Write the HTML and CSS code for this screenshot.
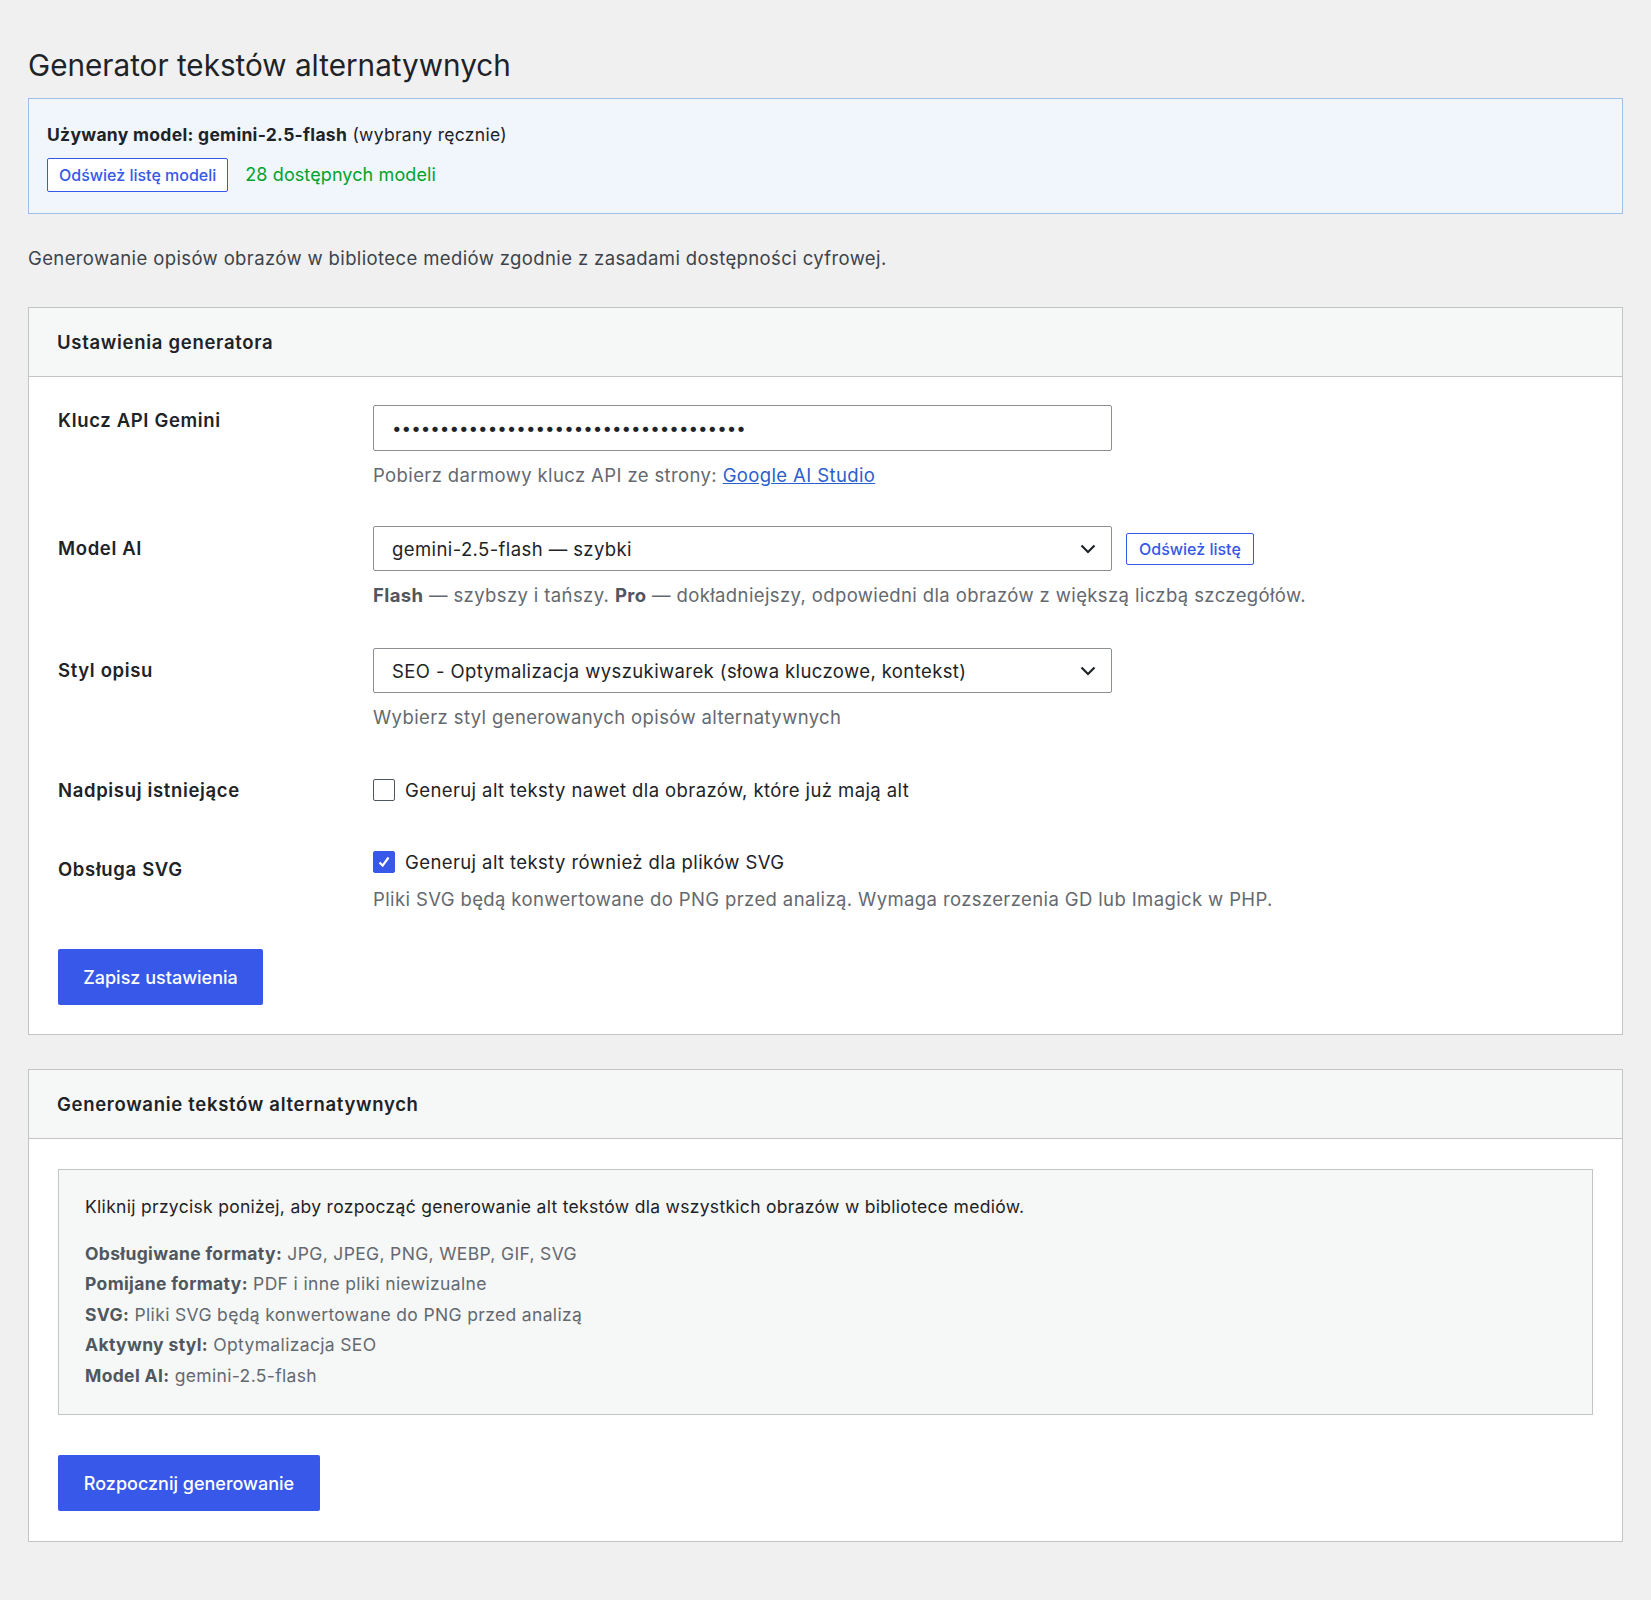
FILE: index.html
```html
<!DOCTYPE html>
<html lang="pl">
<head>
    <meta charset="UTF-8">
    <meta name="viewport" content="width=device-width, initial-scale=1.0">
    <title>Generator tekstów alternatywnych</title>
    <link rel="stylesheet" href="styles.css">
</head>
<body>
    <div class="wrap">
        <h1>Generator tekstów alternatywnych</h1>

        <div class="notice">
            <p class="notice-model"><strong>Używany model: gemini-2.5-flash</strong> (wybrany ręcznie)</p>
            <div class="notice-actions">
                <button class="btn-outline btn-small">Odśwież listę modeli</button>
                <span class="models-count">28 dostępnych modeli</span>
            </div>
        </div>

        <p class="intro">Generowanie opisów obrazów w bibliotece mediów zgodnie z zasadami dostępności cyfrowej.</p>

        <div class="card">
            <h2 class="card-header">Ustawienia generatora</h2>
            <form class="card-body settings">
                <div class="form-row row-key">
                    <label class="form-label label-key">Klucz API Gemini</label>
                    <div class="form-field">
                        <input type="password" class="text-input" value="abcdefghijklmnopqrstuvwxyz0123456789A">
                        <p class="help">Pobierz darmowy klucz API ze strony: <a href="#">Google AI Studio</a></p>
                    </div>
                </div>

                <div class="form-row">
                    <label class="form-label label-select">Model AI</label>
                    <div class="form-field">
                        <div class="field-inline">
                            <select class="select-input">
                                <option>gemini-2.5-flash — szybki</option>
                            </select>
                            <button type="button" class="btn-outline btn-small">Odśwież listę</button>
                        </div>
                        <p class="help"><strong>Flash</strong> — szybszy i tańszy. <strong>Pro</strong> — dokładniejszy, odpowiedni dla obrazów z większą liczbą szczegółów.</p>
                    </div>
                </div>

                <div class="form-row">
                    <label class="form-label label-select">Styl opisu</label>
                    <div class="form-field">
                        <select class="select-input">
                            <option>SEO - Optymalizacja wyszukiwarek (słowa kluczowe, kontekst)</option>
                        </select>
                        <p class="help">Wybierz styl generowanych opisów alternatywnych</p>
                    </div>
                </div>

                <div class="form-row row-check">
                    <label class="form-label">Nadpisuj istniejące</label>
                    <div class="form-field">
                        <label class="check"><input type="checkbox"> Generuj alt teksty nawet dla obrazów, które już mają alt</label>
                    </div>
                </div>

                <div class="form-row row-svg">
                    <label class="form-label">Obsługa SVG</label>
                    <div class="form-field">
                        <label class="check"><input type="checkbox" checked> Generuj alt teksty również dla plików SVG</label>
                        <p class="help">Pliki SVG będą konwertowane do PNG przed analizą. Wymaga rozszerzenia GD lub Imagick w PHP.</p>
                    </div>
                </div>

                <button type="button" class="btn-primary save-btn">Zapisz ustawienia</button>
            </form>
        </div>

        <div class="card">
            <h2 class="card-header">Generowanie tekstów alternatywnych</h2>
            <div class="card-body">
                <div class="info-box">
                    <p class="info-lead">Kliknij przycisk poniżej, aby rozpocząć generowanie alt tekstów dla wszystkich obrazów w bibliotece mediów.</p>
                    <ul class="info-list">
                        <li><strong>Obsługiwane formaty:</strong> JPG, JPEG, PNG, WEBP, GIF, SVG</li>
                        <li><strong>Pomijane formaty:</strong> PDF i inne pliki niewizualne</li>
                        <li><strong>SVG:</strong> Pliki SVG będą konwertowane do PNG przed analizą</li>
                        <li><strong>Aktywny styl:</strong> Optymalizacja SEO</li>
                        <li><strong>Model AI:</strong> gemini-2.5-flash</li>
                    </ul>
                </div>
                <button type="button" class="btn-primary start-btn">Rozpocznij generowanie</button>
            </div>
        </div>
    </div>
</body>
</html>
```

FILE: styles.css
```css
body {
    margin: 0;
    background: #f0f0f1;
    color: #1d2327;
    font-family: Inter, "Noto Sans", sans-serif;
    font-size: 17.5px;
    letter-spacing: 0.3px;
    line-height: 26px;
}
.wrap {
    padding: 46px 28px 58px;
}
h1 {
    margin: 0;
    font-size: 29.7px;
    font-weight: 400;
    letter-spacing: 0;
    line-height: 39px;
}

/* model notice */
.notice {
    margin-top: 13px;
    background: #f0f6fc;
    border: 1px solid #9ec2e6;
    padding: 23px 18px 21px;
}
.notice p {
    margin: 0;
}
.notice-actions {
    display: flex;
    align-items: center;
    gap: 17px;
    margin-top: 10px;
}
.models-count {
    color: #00a32a;
    font-size: 18px;
    letter-spacing: 0.1px;
}
.intro {
    margin: 31px 0 36px;
    color: #3c434a;
    font-size: 18.5px;
    letter-spacing: 0.38px;
}

/* buttons */
button {
    font-family: inherit;
    cursor: pointer;
}
.btn-outline {
    background: #fff;
    border: 1.5px solid #3858e9;
    color: #3858e9;
    border-radius: 2px;
    font-weight: 500;
}
.btn-small {
    height: 34px;
    padding: 0 11px;
    font-size: 16px;
}
.btn-primary {
    background: #3858e9;
    border: none;
    border-radius: 2px;
    color: #fff;
    font-size: 18px;
    font-weight: 500;
    height: 56px;
    padding: 0 24px;
}

/* cards */
.card {
    background: #fff;
    border: 1px solid #c3c4c7;
    margin-bottom: 34px;
}
.card-header {
    margin: 0;
    padding: 21px 28px 21px;
    background: #f6f7f7;
    border-bottom: 1px solid #c3c4c7;
    font-size: 18.5px;
    font-weight: 600;
    letter-spacing: 0.7px;
    line-height: 26px;
}
.card-body {
    padding: 30px 29px 30px;
}
.settings {
    padding-top: 8px;
    padding-bottom: 29px;
}

/* form rows */
.form-row {
    display: grid;
    grid-template-columns: 315px 1fr;
    padding: 20px 0;
}
.row-key {
    padding-bottom: 18px;
}
.form-label {
    font-size: 18.5px;
    font-weight: 600;
    letter-spacing: 0.65px;
}
.label-key {
    padding-top: 2px;
}
.label-select {
    padding-top: 9px;
}
.row-check .form-label,
.row-check .form-field {
    padding-top: 7px;
}
.row-svg .form-field {
    padding-top: 6px;
}
.row-svg .form-label {
    padding-top: 13px;
}
.help {
    margin: 11px 0 0;
    color: #646970;
    font-size: 18.5px;
    letter-spacing: 0.38px;
}
.help strong {
    color: #50575e;
}
.help a {
    color: #2b5fcc;
}
.text-input,
.select-input {
    box-sizing: border-box;
    width: 739px;
    height: 46px;
    border: 1px solid #8c8f94;
    border-radius: 2px;
    background-color: #fff;
    font-family: inherit;
    font-size: 18.5px;
    letter-spacing: 0.4px;
    color: #1d2327;
    padding: 0 18px;
    margin: 0;
    display: block;
}
.text-input {
    font-size: 17px;
    letter-spacing: 0;
}
.select-input {
    appearance: none;
    height: 45px;
    background-image: url("data:image/svg+xml;utf8,<svg xmlns='http://www.w3.org/2000/svg' width='16' height='10' viewBox='0 0 16 10'><path d='M1.5 1.5 8 8l6.5-6.5' fill='none' stroke='%231d2327' stroke-width='2.2'/></svg>");
    background-repeat: no-repeat;
    background-position: right 15px center;
    background-size: 16px 10px;
}
.field-inline {
    display: flex;
    align-items: center;
    gap: 14px;
}
.field-inline .btn-small {
    height: 32px;
    padding: 0 12px;
}
.check {
    display: flex;
    align-items: center;
    gap: 10px;
    font-size: 18.5px;
    letter-spacing: 0.4px;
}
.check input {
    appearance: none;
    width: 22px;
    height: 22px;
    margin: 0;
    border: 1.5px solid #50575e;
    border-radius: 2px;
    background: #fff;
}
.check input:checked {
    background: #3858e9 url("data:image/svg+xml;utf8,<svg xmlns='http://www.w3.org/2000/svg' viewBox='0 0 20 20'><path d='M5 10.5 8.5 14 15 5' fill='none' stroke='white' stroke-width='2.4'/></svg>") center / 18px no-repeat;
    border-color: #3858e9;
}
.save-btn {
    margin-top: 17px;
    width: 205px;
}

/* generation box */
.info-box {
    background: #f6f7f7;
    border: 1px solid #c3c4c7;
    padding: 24px 26px 23px;
}
.info-lead {
    margin: 0 0 19px;
}
.info-list {
    list-style: none;
    margin: 0;
    padding: 0;
    color: #646970;
    letter-spacing: 0.35px;
    line-height: 30.4px;
}
.info-list strong {
    color: #50575e;
}
.start-btn {
    margin-top: 40px;
    width: 262px;
}
```
